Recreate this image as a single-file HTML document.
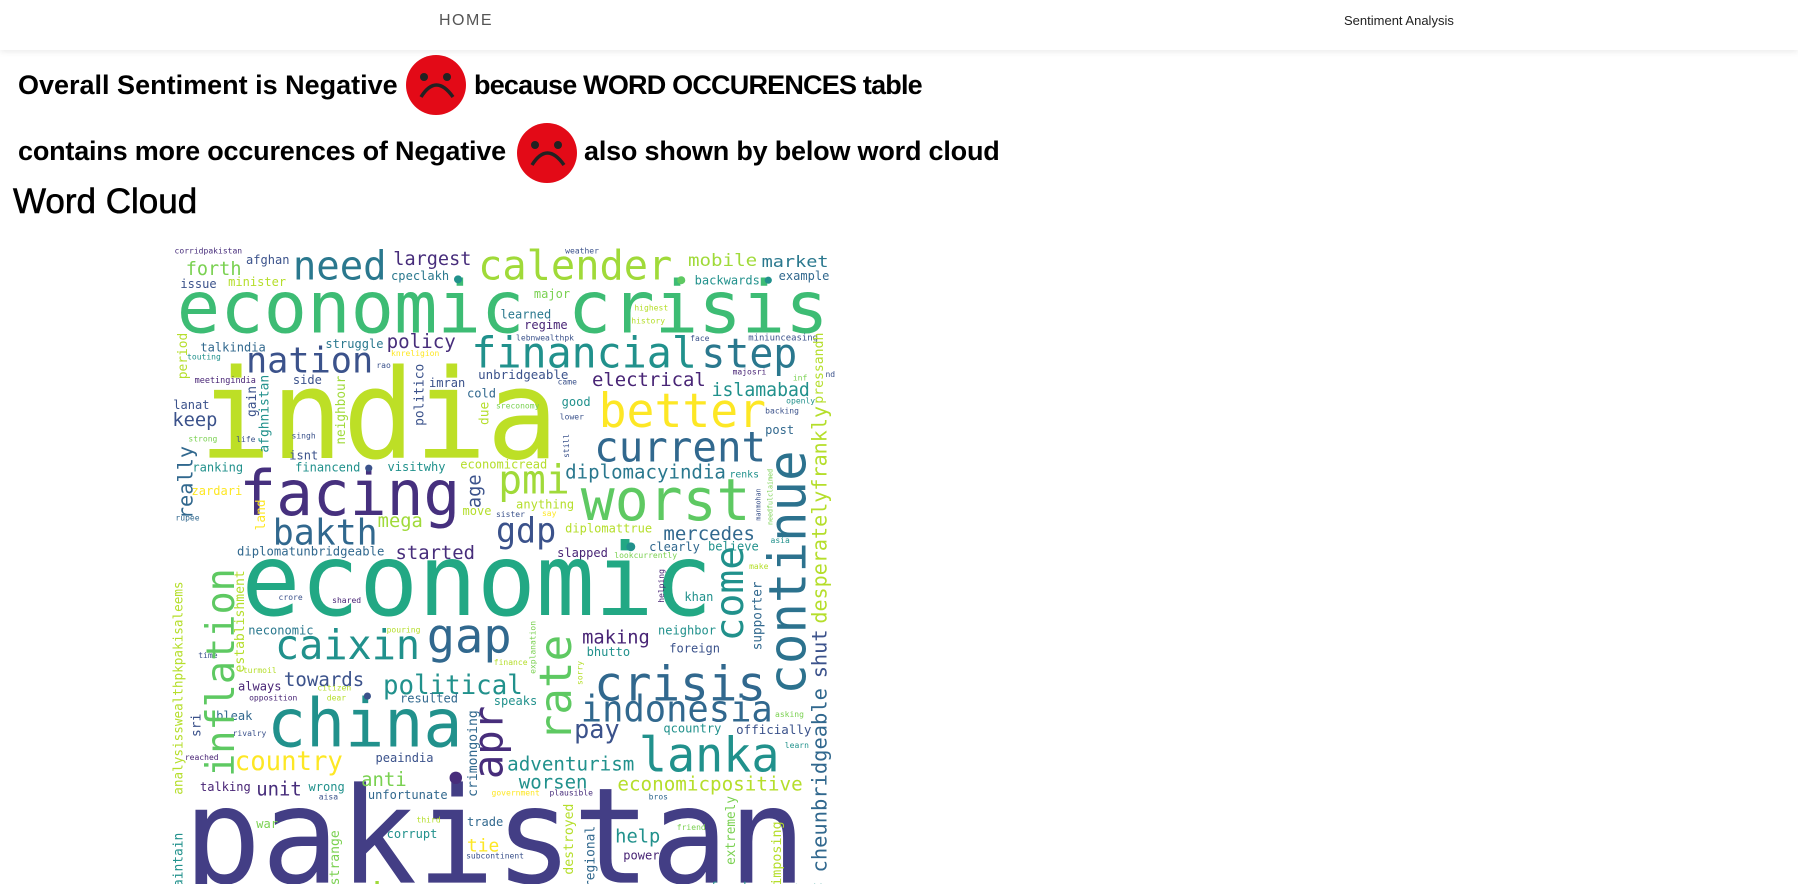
<!DOCTYPE html>
<html><head><meta charset="utf-8"><style>
html,body{margin:0;padding:0;background:#fff;width:1798px;height:891px;overflow:hidden;position:relative;font-family:"Liberation Sans",sans-serif;}
.hdr{position:absolute;left:0;top:0;width:1798px;height:50px;background:#fff;box-shadow:0 2px 6px rgba(0,0,0,0.08);}
.home{position:absolute;left:439px;top:12px;font-size:16px;letter-spacing:1.5px;color:#555;font-weight:300;}
.sa{position:absolute;left:1344px;top:13px;font-size:13px;color:#222;}
.t{position:absolute;font-size:27px;font-weight:bold;color:#000;white-space:nowrap;line-height:1;}
.face{position:absolute;}
</style></head><body>
<div class="hdr"><span class="home">HOME</span><span class="sa">Sentiment Analysis</span></div>
<div class="t" style="left:18px;top:72px;">Overall Sentiment is Negative</div>
<svg class="face" style="left:405px;top:54px" width="62" height="62" viewBox="-31 -31 62 62"><circle r="30" fill="#e30a17"/><circle cx="-12" cy="-8" r="4" fill="#222"/><circle cx="11" cy="-8" r="4" fill="#222"/><path d="M-15 12 Q0 -12 17 12" stroke="#222" stroke-width="3.5" fill="none"/></svg>
<div class="t" style="left:474px;top:72px;letter-spacing:-0.8px;">because WORD OCCURENCES table</div>
<div class="t" style="left:18px;top:138px;letter-spacing:-0.2px;">contains more occurences of Negative</div>
<svg class="face" style="left:516px;top:122px" width="62" height="62" viewBox="-31 -31 62 62"><circle r="30" fill="#e30a17"/><circle cx="-12" cy="-8" r="4" fill="#222"/><circle cx="11" cy="-8" r="4" fill="#222"/><path d="M-15 12 Q0 -12 17 12" stroke="#222" stroke-width="3.5" fill="none"/></svg>
<div class="t" style="left:584px;top:138px;letter-spacing:-0.2px;">also shown by below word cloud</div>
<div class="t" style="left:13px;top:184px;font-size:35px;font-weight:normal;-webkit-text-stroke:0.6px #000;">Word Cloud</div>
<svg style="position:absolute;left:150px;top:226px" width="700" height="658" viewBox="0 0 1568 1481" preserveAspectRatio="none" font-family="'DejaVu Sans Mono',monospace">
<g>
<text x="60" y="240" font-size="162" fill="#3dbc74" textLength="1460" lengthAdjust="spacingAndGlyphs">economic crisis</text>
<text x="110" y="522" font-size="280" fill="#bddf26" textLength="805" lengthAdjust="spacingAndGlyphs">india</text>
<text x="205" y="875" font-size="225" fill="#22a884" textLength="1055" lengthAdjust="spacingAndGlyphs">economic</text>
<text x="75" y="1478" font-size="300" fill="#433e85" textLength="1395" lengthAdjust="spacingAndGlyphs">pakistan</text>
<text x="262" y="1172" font-size="150" fill="#21918c" textLength="438" lengthAdjust="spacingAndGlyphs">china</text>
<text x="200" y="650" font-size="140" fill="#46307e" textLength="495" lengthAdjust="spacingAndGlyphs">facing</text>
<text x="965" y="662" font-size="130" fill="#5ec962" textLength="380" lengthAdjust="spacingAndGlyphs">worst</text>
<text x="1005" y="452" font-size="106" fill="#fde725" textLength="375" lengthAdjust="spacingAndGlyphs">better</text>
<text x="995" y="530" font-size="94" fill="#31688e" textLength="385" lengthAdjust="spacingAndGlyphs">current</text>
<text x="720" y="318" font-size="96" fill="#21918c" textLength="505" lengthAdjust="spacingAndGlyphs">financial</text>
<text x="1235" y="318" font-size="92" fill="#2a788e" textLength="215" lengthAdjust="spacingAndGlyphs">step</text>
<text x="215" y="330" font-size="80" fill="#3b528b" textLength="285" lengthAdjust="spacingAndGlyphs">nation</text>
<text x="320" y="120" font-size="90" fill="#2a788e" textLength="210" lengthAdjust="spacingAndGlyphs">need</text>
<text x="735" y="120" font-size="92" fill="#a0da39" textLength="435" lengthAdjust="spacingAndGlyphs">calender</text>
<text x="545" y="88" font-size="42" fill="#472d7b" textLength="175" lengthAdjust="spacingAndGlyphs">largest</text>
<text x="1205" y="90" font-size="37" fill="#a0da39" textLength="155" lengthAdjust="spacingAndGlyphs">mobile</text>
<text x="1370" y="92" font-size="36" fill="#2a788e" textLength="150" lengthAdjust="spacingAndGlyphs">market</text>
<text x="80" y="110" font-size="42" fill="#7ad151" textLength="125" lengthAdjust="spacingAndGlyphs">forth</text>
<text x="215" y="85" font-size="27" fill="#3b528b">afghan</text>
<text x="68" y="140" font-size="27" fill="#3b528b">issue</text>
<text x="175" y="135" font-size="27" fill="#b5de2b">minister</text>
<text x="540" y="122" font-size="27" fill="#2a788e">cpeclakh</text>
<text x="1220" y="132" font-size="27" fill="#21918c">backwards</text>
<text x="1408" y="122" font-size="27" fill="#31688e">example</text>
<text x="55" y="62" font-size="18" fill="#472d7b">corridpakistan</text>
<text x="930" y="62" font-size="18" fill="#3b528b">weather</text>
<text x="860" y="162" font-size="27" fill="#7ad151">major</text>
<text x="785" y="208" font-size="27" fill="#2a788e">learned</text>
<text x="838" y="232" font-size="27" fill="#482475">regime</text>
<text x="1085" y="190" font-size="18" fill="#b5de2b">highest</text>
<text x="1078" y="220" font-size="18" fill="#b5de2b">history</text>
<text x="530" y="275" font-size="43" fill="#472d7b" textLength="155" lengthAdjust="spacingAndGlyphs">policy</text>
<text x="393" y="275" font-size="27" fill="#2a788e">struggle</text>
<text x="113" y="283" font-size="27" fill="#31688e">talkindia</text>
<text x="83" y="300" font-size="18" fill="#21918c">touting</text>
<text x="540" y="293" font-size="18" fill="#fde725">knreligion</text>
<text x="820" y="258" font-size="18" fill="#3b528b">lebnwealthpk</text>
<text x="1210" y="259" font-size="18" fill="#3b528b">face</text>
<text x="1340" y="258" font-size="20" fill="#3b528b">miniunceasing</text>
<text x="990" y="360" font-size="42" fill="#482475" textLength="255" lengthAdjust="spacingAndGlyphs">electrical</text>
<text x="1258" y="383" font-size="41" fill="#21918c" textLength="220" lengthAdjust="spacingAndGlyphs">islamabad</text>
<text x="735" y="344" font-size="28" fill="#3b528b">unbridgeable</text>
<text x="625" y="362" font-size="27" fill="#3b528b">imran</text>
<text x="320" y="356" font-size="27" fill="#3b528b">side</text>
<text x="507" y="320" font-size="18" fill="#3b528b">rao</text>
<text x="100" y="353" font-size="19" fill="#482475">meetingindia</text>
<text x="913" y="357" font-size="18" fill="#3b528b">came</text>
<text x="1305" y="334" font-size="18" fill="#482475">majosri</text>
<text x="1440" y="348" font-size="18" fill="#7ad151">inf</text>
<text x="1513" y="340" font-size="18" fill="#3b528b">nd</text>
<text x="52" y="412" font-size="27" fill="#3b528b">lanat</text>
<text x="50" y="450" font-size="42" fill="#3b528b">keep</text>
<text x="710" y="386" font-size="27" fill="#31688e">cold</text>
<text x="922" y="405" font-size="27" fill="#21918c">good</text>
<text x="775" y="411" font-size="18" fill="#7ad151">sreconomy</text>
<text x="918" y="436" font-size="18" fill="#3b528b">lower</text>
<text x="1378" y="422" font-size="18" fill="#3b528b">backing</text>
<text x="1425" y="400" font-size="18" fill="#21918c">openly</text>
<text x="1378" y="468" font-size="27" fill="#31688e">post</text>
<text x="86" y="485" font-size="18" fill="#7ad151">strong</text>
<text x="193" y="486" font-size="18" fill="#3b528b">life</text>
<text x="317" y="478" font-size="18" fill="#3b528b">singh</text>
<text x="312" y="525" font-size="27" fill="#3b528b">isnt</text>
<text x="95" y="553" font-size="27" fill="#21918c">ranking</text>
<text x="325" y="553" font-size="27" fill="#21918c">financend</text>
<text x="532" y="551" font-size="27" fill="#21918c">visitwhy</text>
<text x="695" y="546" font-size="27" fill="#b5de2b">economicread</text>
<text x="930" y="568" font-size="43" fill="#2a788e" textLength="360" lengthAdjust="spacingAndGlyphs">diplomacyindia</text>
<text x="1298" y="566" font-size="22" fill="#21918c">renks</text>
<text x="780" y="602" font-size="90" fill="#a0da39" textLength="160" lengthAdjust="spacingAndGlyphs">pmi</text>
<text x="93" y="606" font-size="27" fill="#fde725">zardari</text>
<text x="57" y="663" font-size="18" fill="#31688e">rupee</text>
<text x="510" y="677" font-size="42" fill="#a0da39">mega</text>
<text x="700" y="651" font-size="27" fill="#b5de2b">move</text>
<text x="820" y="636" font-size="27" fill="#b5de2b">anything</text>
<text x="775" y="655" font-size="18" fill="#3b528b">sister</text>
<text x="878" y="653" font-size="18" fill="#fde725">say</text>
<text x="275" y="717" font-size="80" fill="#31688e" textLength="235" lengthAdjust="spacingAndGlyphs">bakth</text>
<text x="775" y="712" font-size="78" fill="#3b528b" textLength="135" lengthAdjust="spacingAndGlyphs">gdp</text>
<text x="930" y="690" font-size="27" fill="#b5de2b">diplomattrue</text>
<text x="1150" y="707" font-size="42" fill="#31688e" textLength="205" lengthAdjust="spacingAndGlyphs">mercedes</text>
<text x="195" y="742" font-size="27.5" fill="#31688e" textLength="330" lengthAdjust="spacingAndGlyphs">diplomatunbridgeable</text>
<text x="550" y="750" font-size="42" fill="#472d7b" textLength="178" lengthAdjust="spacingAndGlyphs">started</text>
<text x="912" y="745" font-size="27" fill="#482475">slapped</text>
<text x="1118" y="732" font-size="27" fill="#31688e">clearly</text>
<text x="1250" y="730" font-size="27" fill="#21918c">believe</text>
<text x="1040" y="747" font-size="18" fill="#7ad151">lookcurrently</text>
<text x="1390" y="714" font-size="18" fill="#21918c">asia</text>
<text x="1342" y="772" font-size="18" fill="#b5de2b">make</text>
<text x="288" y="842" font-size="18" fill="#3b528b">crore</text>
<text x="408" y="849" font-size="18" fill="#482475">shared</text>
<text x="1197" y="844" font-size="27" fill="#21918c">khan</text>
<text x="280" y="975" font-size="92" fill="#21918c" textLength="325" lengthAdjust="spacingAndGlyphs">caixin</text>
<text x="620" y="960" font-size="108" fill="#31688e" textLength="190" lengthAdjust="spacingAndGlyphs">gap</text>
<text x="220" y="920" font-size="27" fill="#2a788e">neconomic</text>
<text x="530" y="915" font-size="18" fill="#b5de2b">pouring</text>
<text x="968" y="940" font-size="42" fill="#482475">making</text>
<text x="1138" y="920" font-size="27" fill="#21918c">neighbor</text>
<text x="1163" y="960" font-size="27" fill="#3b528b">foreign</text>
<text x="978" y="968" font-size="27" fill="#21918c">bhutto</text>
<text x="108" y="972" font-size="18" fill="#3b528b">time</text>
<text x="770" y="988" font-size="18" fill="#b5de2b">finance</text>
<text x="208" y="1006" font-size="18" fill="#b5de2b">turmoil</text>
<text x="995" y="1068" font-size="108" fill="#31688e" textLength="385" lengthAdjust="spacingAndGlyphs">crisis</text>
<text x="522" y="1053" font-size="60" fill="#21918c" textLength="313" lengthAdjust="spacingAndGlyphs">political</text>
<text x="300" y="1035" font-size="43" fill="#3b528b" textLength="180" lengthAdjust="spacingAndGlyphs">towards</text>
<text x="197" y="1046" font-size="27" fill="#482475">always</text>
<text x="375" y="1046" font-size="18" fill="#b5de2b">citizen</text>
<text x="222" y="1068" font-size="18" fill="#482475">opposition</text>
<text x="396" y="1068" font-size="18" fill="#b5de2b">dear</text>
<text x="560" y="1073" font-size="27" fill="#31688e">resulted</text>
<text x="770" y="1078" font-size="27" fill="#21918c">speaks</text>
<text x="965" y="1115" font-size="82" fill="#31688e" textLength="430" lengthAdjust="spacingAndGlyphs">indonesia</text>
<text x="1400" y="1105" font-size="18" fill="#7ad151">asking</text>
<text x="148" y="1112" font-size="27" fill="#31688e">bleak</text>
<text x="185" y="1148" font-size="18" fill="#3b528b">rivalry</text>
<text x="950" y="1152" font-size="58" fill="#3b528b" textLength="102" lengthAdjust="spacingAndGlyphs">pay</text>
<text x="1150" y="1140" font-size="27" fill="#21918c">qcountry</text>
<text x="1313" y="1143" font-size="28" fill="#3b528b">officially</text>
<text x="1422" y="1175" font-size="18" fill="#21918c">learn</text>
<text x="1095" y="1228" font-size="108" fill="#21918c" textLength="315" lengthAdjust="spacingAndGlyphs">lanka</text>
<text x="190" y="1224" font-size="60" fill="#fde725" textLength="242" lengthAdjust="spacingAndGlyphs">country</text>
<text x="78" y="1202" font-size="18" fill="#482475">reached</text>
<text x="505" y="1206" font-size="27" fill="#3b528b">peaindia</text>
<text x="800" y="1226" font-size="43" fill="#21918c" textLength="285" lengthAdjust="spacingAndGlyphs">adventurism</text>
<text x="473" y="1260" font-size="43" fill="#7ad151" textLength="102" lengthAdjust="spacingAndGlyphs">anti</text>
<text x="238" y="1282" font-size="43" fill="#472d7b" textLength="102" lengthAdjust="spacingAndGlyphs">unit</text>
<text x="112" y="1272" font-size="27" fill="#482475">talking</text>
<text x="355" y="1272" font-size="27" fill="#21918c">wrong</text>
<text x="826" y="1266" font-size="43" fill="#21918c" textLength="154" lengthAdjust="spacingAndGlyphs">worsen</text>
<text x="1047" y="1270" font-size="43" fill="#b5de2b" textLength="415" lengthAdjust="spacingAndGlyphs">economicpositive</text>
<text x="488" y="1290" font-size="27" fill="#31688e">unfortunate</text>
<text x="378" y="1291" font-size="18" fill="#3b528b">aisa</text>
<text x="765" y="1282" font-size="18" fill="#fde725">government</text>
<text x="895" y="1282" font-size="18" fill="#472d7b">plausible</text>
<text x="1117" y="1291" font-size="18" fill="#31688e">bros</text>
<text x="238" y="1355" font-size="27" fill="#7ad151">war</text>
<text x="597" y="1343" font-size="18" fill="#b5de2b">third</text>
<text x="710" y="1351" font-size="27" fill="#31688e">trade</text>
<text x="1180" y="1360" font-size="18" fill="#7ad151">friend</text>
<text x="530" y="1377" font-size="27" fill="#21918c">corrupt</text>
<text x="710" y="1408" font-size="40" fill="#fde725">tie</text>
<text x="1042" y="1388" font-size="42" fill="#21918c">help</text>
<text x="708" y="1424" font-size="18" fill="#3b528b">subcontinent</text>
<text x="1060" y="1426" font-size="27" fill="#482475">power</text>
<text x="658" y="1502" font-size="27" fill="#31688e">army</text>
<text x="1255" y="1497" font-size="27" fill="#21918c">freedom</text>
<text x="1400" y="1493" font-size="18" fill="#21918c">countrychina</text>
<text x="630" y="1533" font-size="27" fill="#7ad151">report</text>
<text x="613" y="1560" font-size="18" fill="#21918c">indiaindia</text>
<text x="180" y="1560" font-size="94" fill="#21918c" textLength="220" lengthAdjust="spacingAndGlyphs">want</text>
<text x="470" y="1540" font-size="86" fill="#a0da39" textLength="150" lengthAdjust="spacingAndGlyphs">day</text>
<text x="748" y="1545" font-size="92" fill="#21918c" textLength="377" lengthAdjust="spacingAndGlyphs">economy</text>
<text x="1145" y="1560" font-size="92" fill="#a0da39" textLength="380" lengthAdjust="spacingAndGlyphs">service</text>
</g>
<g>
<text transform="translate(188,1240) rotate(-90)" font-size="87" fill="#5ec962" textLength="470" lengthAdjust="spacingAndGlyphs">inflation</text>
<text transform="translate(1468,1055) rotate(-90)" font-size="115" fill="#2c728e" textLength="550" lengthAdjust="spacingAndGlyphs">continue</text>
<text transform="translate(943,1160) rotate(-90)" font-size="100" fill="#5ec962" textLength="240" lengthAdjust="spacingAndGlyphs">rate</text>
<text transform="translate(790,1245) rotate(-90)" font-size="92" fill="#472d7b" textLength="165" lengthAdjust="spacingAndGlyphs">apr</text>
<text transform="translate(1328,935) rotate(-90)" font-size="88" fill="#21918c" textLength="215" lengthAdjust="spacingAndGlyphs">come</text>
<text transform="translate(95,660) rotate(-90)" font-size="46" fill="#31688e" textLength="165" lengthAdjust="spacingAndGlyphs">really</text>
<text transform="translate(740,635) rotate(-90)" font-size="42" fill="#3b528b">age</text>
<text transform="translate(1515,895) rotate(-90)" font-size="45" fill="#b5de2b" textLength="490" lengthAdjust="spacingAndGlyphs">desperatelyfrankly</text>
<text transform="translate(1515,1018) rotate(-90)" font-size="45" fill="#3b528b" textLength="110" lengthAdjust="spacingAndGlyphs">shut</text>
<text transform="translate(1515,1455) rotate(-90)" font-size="46" fill="#31688e" textLength="415" lengthAdjust="spacingAndGlyphs">cheunbridgeable</text>
<text transform="translate(210,1005) rotate(-90)" font-size="29" fill="#b5de2b" textLength="230" lengthAdjust="spacingAndGlyphs">establishment</text>
<text transform="translate(265,510) rotate(-90)" font-size="29" fill="#21918c" textLength="175" lengthAdjust="spacingAndGlyphs">afghnistan</text>
<text transform="translate(237,430) rotate(-90)" font-size="29" fill="#3b528b">gain</text>
<text transform="translate(437,492) rotate(-90)" font-size="29" fill="#a0da39" textLength="155" lengthAdjust="spacingAndGlyphs">neighbour</text>
<text transform="translate(613,450) rotate(-90)" font-size="29" fill="#3b528b" textLength="140" lengthAdjust="spacingAndGlyphs">politico</text>
<text transform="translate(758,448) rotate(-90)" font-size="29" fill="#b5de2b">due</text>
<text transform="translate(258,685) rotate(-90)" font-size="29" fill="#fde725">land</text>
<text transform="translate(83,345) rotate(-90)" font-size="29" fill="#b5de2b">period</text>
<text transform="translate(938,522) rotate(-90)" font-size="18" fill="#3b528b">still</text>
<text transform="translate(1508,400) rotate(-90)" font-size="29" fill="#b5de2b" textLength="160" lengthAdjust="spacingAndGlyphs">pressandh</text>
<text transform="translate(73,1280) rotate(-90)" font-size="29" fill="#b5de2b" textLength="480" lengthAdjust="spacingAndGlyphs">analysisswealthpkpakisaleems</text>
<text transform="translate(113,1150) rotate(-90)" font-size="29" fill="#3b528b">sri</text>
<text transform="translate(73,1575) rotate(-90)" font-size="29" fill="#21918c">alusmaintain</text>
<text transform="translate(423,1555) rotate(-90)" font-size="29" fill="#7ad151" textLength="195" lengthAdjust="spacingAndGlyphs">fullstrange</text>
<text transform="translate(733,1285) rotate(-90)" font-size="29" fill="#31688e" textLength="195" lengthAdjust="spacingAndGlyphs">crimongoing</text>
<text transform="translate(948,1460) rotate(-90)" font-size="29" fill="#b5de2b" textLength="160" lengthAdjust="spacingAndGlyphs">destroyed</text>
<text transform="translate(996,1490) rotate(-90)" font-size="29" fill="#31688e" textLength="140" lengthAdjust="spacingAndGlyphs">regional</text>
<text transform="translate(1310,1438) rotate(-90)" font-size="29" fill="#7ad151" textLength="155" lengthAdjust="spacingAndGlyphs">extremely</text>
<text transform="translate(1413,1485) rotate(-90)" font-size="29" fill="#b5de2b" textLength="145" lengthAdjust="spacingAndGlyphs">imposing</text>
<text transform="translate(1370,955) rotate(-90)" font-size="29" fill="#31688e" textLength="155" lengthAdjust="spacingAndGlyphs">supporter</text>
<text transform="translate(864,1008) rotate(-90)" font-size="18" fill="#7ad151">explanation</text>
<text transform="translate(969,1033) rotate(-90)" font-size="18" fill="#b5de2b">sorry</text>
<text transform="translate(1151,848) rotate(-90)" font-size="18" fill="#482475">helping</text>
<text transform="translate(1367,663) rotate(-90)" font-size="15" fill="#3b528b">manmohan</text>
<text transform="translate(1394,673) rotate(-90)" font-size="15" fill="#7ad151">needfulclaimed</text>
</g>
<g fill="#21918c"><circle cx="690" cy="120" r="9"/><circle cx="1190" cy="122" r="9" fill="#5ec962"/><circle cx="1385" cy="122" r="8"/><circle cx="490" cy="545" r="8" fill="#3b528b"/><circle cx="1077" cy="722" r="10"/><circle cx="487" cy="1058" r="8" fill="#3b528b"/><circle cx="685" cy="1242" r="14" fill="#472d7b"/></g>
</svg>
</body></html>
